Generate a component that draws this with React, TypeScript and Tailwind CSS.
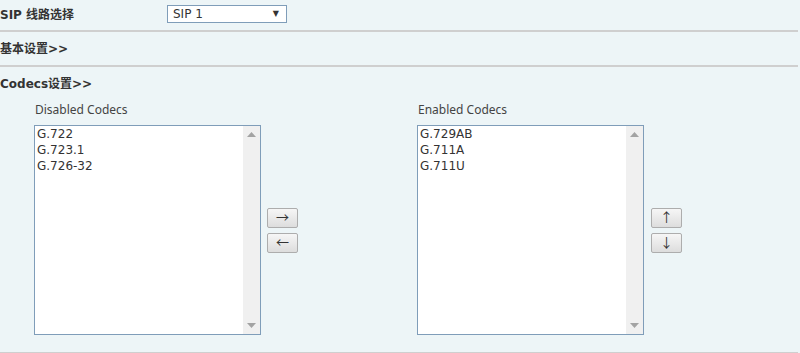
const disabled = ["G.722", "G.723.1", "G.726-32"];
const enabled = ["G.729AB", "G.711A", "G.711U"];

function ListBox({ items }: { items: string[] }) {
  return (
    <div className="flex h-[210px] w-[227px] border border-[#7f9db9] bg-white">
      <div className="flex-1 pl-[2px] font-['DejaVu_Sans',sans-serif] text-[12px] leading-[16px] text-[#333]">
        {items.map((c) => (
          <div key={c}>{c}</div>
        ))}
      </div>
      <div className="flex w-[17px] flex-col items-center justify-between bg-[#f0f0f0] py-[6px]">
        <svg width="9" height="5" viewBox="0 0 9 5">
          <path d="M4.5 0 L9 5 L0 5 Z" fill="#a3a3a3" />
        </svg>
        <svg width="9" height="5" viewBox="0 0 9 5">
          <path d="M0 0 L9 0 L4.5 5 Z" fill="#a3a3a3" />
        </svg>
      </div>
    </div>
  );
}

function ArrowButton({ label }: { label: string }) {
  return (
    <button className="flex h-[20px] w-[31px] items-center justify-center rounded-[2px] border border-[#adadad] bg-gradient-to-b from-[#f6f6f6] to-[#dddddd] text-[13px] leading-none text-[#333]">
      {label}
    </button>
  );
}

function CodecColumn({ title, items, buttons }: { title: string; items: string[]; buttons: string[] }) {
  return (
    <div className="flex w-[384px] flex-col">
      <div className="pl-[1px] text-[12px] leading-[16px] text-[#444]">{title}</div>
      <div className="mt-[7px] flex items-center gap-[6px]">
        <ListBox items={items} />
        <div className="flex flex-col gap-[5px]">
          {buttons.map((b) => (
            <ArrowButton key={b} label={b} />
          ))}
        </div>
      </div>
    </div>
  );
}

export default function App() {
  return (
    <div className="h-[353px] w-[800px] bg-[#edf5f7] font-['Noto_Sans','Noto_Sans_CJK_SC',sans-serif] text-[#333]">
      <div className="flex h-[30px] items-center font-['DejaVu_Sans','Noto_Sans_CJK_SC',sans-serif]">
        <div className="w-[167px] text-[12px] font-bold">SIP 线路选择</div>
        <div className="mb-[3px] flex h-[18px] w-[120px] items-center justify-between border border-[#7f9db9] bg-white pl-[5px] pr-[7px] text-[12px]">
          <span>SIP 1</span>
          <span className="text-[8px]">▼</span>
        </div>
      </div>
      <div className="mr-[2px] h-[2px] bg-[#cfcfcf]" />
      <div className="flex h-[33px] items-center font-['DejaVu_Sans','Noto_Sans_CJK_SC',sans-serif] text-[12px] font-bold">基本设置&gt;&gt;</div>
      <div className="mr-[2px] h-[2px] bg-[#cfcfcf]" />
      <div className="flex h-[33px] items-center font-['DejaVu_Sans','Noto_Sans_CJK_SC',sans-serif] text-[12px] font-bold">Codecs设置&gt;&gt;</div>
      <div className="flex h-[252px] pl-[34px] pt-[2px]">
        <CodecColumn title="Disabled Codecs" items={disabled} buttons={["→", "←"]} />
        <div className="flex w-[384px] flex-col">
          <div className="pl-[1px] text-[12px] leading-[16px] text-[#444]">Enabled Codecs</div>
          <div className="mt-[7px] flex items-center gap-[7px]">
            <ListBox items={enabled} />
            <div className="flex flex-col gap-[5px]">
              <ArrowButton label="↑" />
              <ArrowButton label="↓" />
            </div>
          </div>
        </div>
      </div>
      <div className="mr-[2px] h-[2px] bg-[#cfcfcf]" />
    </div>
  );
}
